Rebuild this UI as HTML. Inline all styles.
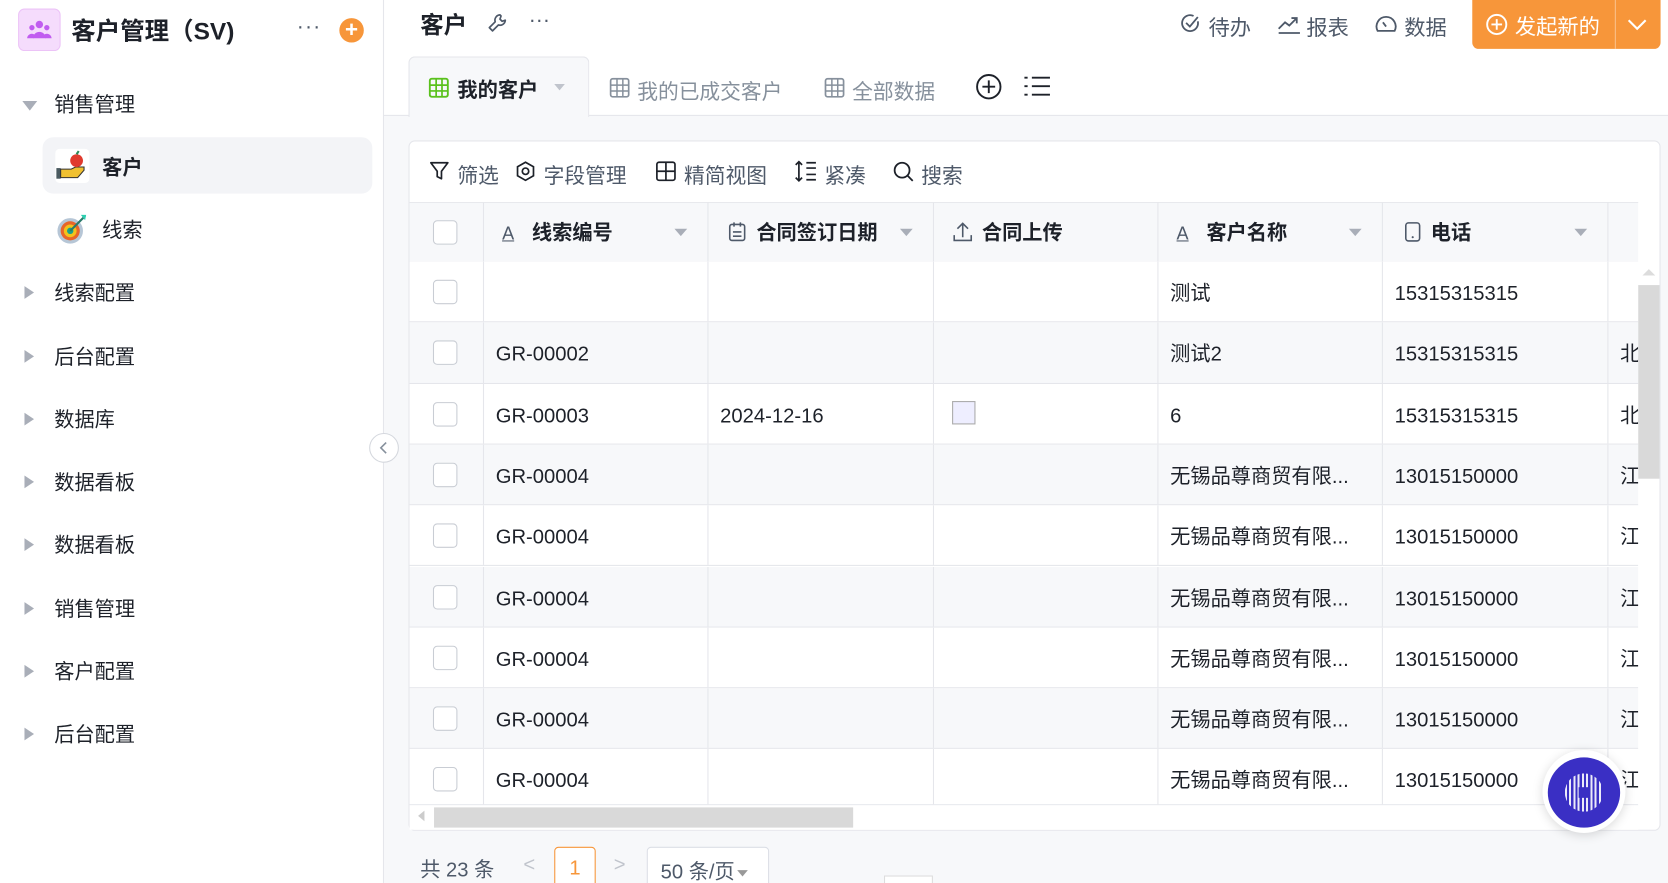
<!DOCTYPE html>
<html><head><meta charset="utf-8"><style>
*{box-sizing:border-box;margin:0;padding:0}
html,body{width:1668px;height:883px;overflow:hidden;background:#fff}
body{font-family:"Liberation Sans","Noto Sans CJK SC",sans-serif;color:#1d2129}
#w{width:1568px;height:830px;transform:scale(1.06378);transform-origin:0 0;position:relative}
.a{position:absolute;white-space:nowrap}
.side{position:absolute;left:0;top:0;width:361px;height:830px;border-right:1px solid #e5e6eb;background:#fff}
.mi{position:absolute;left:51px;font-size:19px;line-height:24px;color:#1d2129}
.tri{position:absolute;left:23px;width:0;height:0;border-top:6px solid transparent;border-bottom:6px solid transparent;border-left:9px solid #a9aeb8}
.g{color:#4e5969}
.th{position:absolute;top:190px;height:56px;border-right:1px solid #e5e6eb;font-size:19px;font-weight:bold;line-height:60px}
.cell{position:absolute;font-size:19px;line-height:24px;color:#1d2129}
.cb{position:absolute;left:407px;width:23px;height:23px;border:1px solid #c9cdd4;border-radius:4px;background:#fff}
.caret{display:inline-block;width:0;height:0;border-left:6px solid transparent;border-right:6px solid transparent;border-top:7px solid #a9aeb8;position:absolute;top:25px}
</style></head><body><div id="w">
<div class="side">
 <div class="a" style="left:17px;top:8px;width:40px;height:40px;background:#f5dcfc;border:1px solid #ecc3f7;border-radius:6px">
  <svg width="40" height="40" viewBox="0 0 40 40" style="position:absolute;left:-1px;top:-1px"><g fill="#c15df0"><circle cx="20" cy="15" r="3.5"/><circle cx="13" cy="18" r="2.5"/><circle cx="27" cy="18" r="2.5"/><path d="M14 28a6 6 0 0 1 12 0z"/><path d="M8.5 28a4.5 4.5 0 0 1 7-3.5l-1 3.5z"/><path d="M31.5 28a4.5 4.5 0 0 0-7-3.5l1 3.5z"/></g></svg>
 </div>
 <div class="a" style="left:67px;top:15px;font-size:23px;font-weight:bold;line-height:28px">客户管理（SV)</div>
 <div class="a" style="left:279px;top:14px;font-size:20px;color:#4e5969;letter-spacing:1px">···</div>
 <div class="a" style="left:319px;top:17px;width:23px;height:23px;border-radius:50%;background:#f7963a;color:#fff;text-align:center;font-size:21px;line-height:23px;font-weight:bold">+</div>
 <div class="a" style="left:21px;top:95px;border-left:7px solid transparent;border-right:7px solid transparent;border-top:9px solid #a9aeb8"></div>
 <div class="mi" style="top:88px">销售管理</div>
 <div class="a" style="left:40px;top:129px;width:310px;height:53px;background:#f3f4f7;border-radius:10px"></div>
 <div class="a" style="left:52px;top:140px;width:32px;height:32px;background:#fff;border-radius:4px">
  <svg width="32" height="32" viewBox="0 0 32 32"><rect x="1" y="18" width="4" height="10" fill="#4a5a60"/><path d="M5 19h10l4-2h8v3l-6 7H5z" fill="#f0c030" stroke="#333" stroke-width="1"/><circle cx="20" cy="11" r="6" fill="#e03a2e"/><path d="M20 5l2-3" stroke="#2a8a5a" stroke-width="2"/></svg>
 </div>
 <div class="a" style="left:96px;top:147px;font-size:19px;font-weight:bold;line-height:24px">客户</div>
 <div class="a" style="left:52px;top:199px;width:32px;height:32px">
  <svg width="32" height="32" viewBox="0 0 32 32"><circle cx="14" cy="18" r="12" fill="#b6c6d6"/><circle cx="14" cy="18" r="9" fill="#e8652a"/><circle cx="14" cy="18" r="6" fill="#f3c21b"/><circle cx="14" cy="18" r="3" fill="#1aa08a"/><path d="M14 18L28 4" stroke="#2a7a6a" stroke-width="2"/><path d="M24 3l5 0-1 5z" fill="#2ccfb0"/></svg>
 </div>
 <div class="mi" style="left:96px;top:206px">线索</div>
 <div class="tri" style="top:269px"></div><div class="mi" style="top:265px">线索配置</div>
 <div class="tri" style="top:329px"></div><div class="mi" style="top:325px">后台配置</div>
 <div class="tri" style="top:388px"></div><div class="mi" style="top:384px">数据库</div>
 <div class="tri" style="top:447px"></div><div class="mi" style="top:443px">数据看板</div>
 <div class="tri" style="top:506px"></div><div class="mi" style="top:502px">数据看板</div>
 <div class="tri" style="top:566px"></div><div class="mi" style="top:562px">销售管理</div>
 <div class="tri" style="top:625px"></div><div class="mi" style="top:621px">客户配置</div>
 <div class="tri" style="top:684px"></div><div class="mi" style="top:680px">后台配置</div>
</div>
<div class="a" style="left:347px;top:407px;width:28px;height:28px;border-radius:50%;background:#fff;border:1px solid #d5d8de;z-index:3">
 <svg width="26" height="26" viewBox="0 0 26 26"><path d="M15 8l-5 5 5 5" fill="none" stroke="#86909c" stroke-width="1.5"/></svg></div>

<div class="a" style="left:395px;top:10px;font-size:22px;font-weight:bold;line-height:28px">客户</div>
<svg class="a" style="left:457px;top:11px" width="22" height="22" viewBox="0 0 22 22"><path d="M13 3a5 5 0 0 0-4.5 6.5L3 15l3 3 5.5-5.5A5 5 0 0 0 18 8l-3 1-2-2 1-3z" fill="none" stroke="#4e5969" stroke-width="1.6" stroke-linejoin="round"/></svg>
<div class="a" style="left:497px;top:8px;font-size:20px;color:#4e5969">···</div>
<svg class="a" style="left:1109px;top:12px" width="20" height="20" viewBox="0 0 20 20"><path d="M17 8A7.5 7.5 0 1 1 13 3" fill="none" stroke="#4e5969" stroke-width="1.7"/><path d="M6 9.5l3.5 3.5L17 4" fill="none" stroke="#4e5969" stroke-width="1.7"/></svg>
<div class="a g" style="left:1136px;top:10px;font-size:20px">待办</div>
<svg class="a" style="left:1201px;top:13px" width="22" height="20" viewBox="0 0 22 20"><path d="M1 14l6-6 4 3 7-7M13 4h5v5" fill="none" stroke="#4e5969" stroke-width="1.7"/><path d="M1 18h20" stroke="#4e5969" stroke-width="1.7"/></svg>
<div class="a g" style="left:1228px;top:10px;font-size:20px">报表</div>
<svg class="a" style="left:1292px;top:12px" width="22" height="20" viewBox="0 0 22 20"><path d="M3 17a9 9 0 1 1 16 0z" fill="none" stroke="#4e5969" stroke-width="1.7"/><path d="M11 13l-3-4" stroke="#4e5969" stroke-width="1.7"/></svg>
<div class="a g" style="left:1320px;top:10px;font-size:20px">数据</div>
<div class="a" style="left:1384px;top:0;width:177px;height:46px;background:#f7963a;border-radius:0 0 6px 6px"></div>
<div class="a" style="left:1518px;top:0;width:1px;height:46px;background:#fbc08a"></div>
<svg class="a" style="left:1396px;top:12px" width="22" height="22" viewBox="0 0 22 22"><circle cx="11" cy="11" r="9" fill="none" stroke="#fff" stroke-width="1.8"/><path d="M11 6v10M6 11h10" stroke="#fff" stroke-width="1.8"/></svg>
<div class="a" style="left:1424px;top:9px;font-size:20px;color:#fff">发起新的</div>
<svg class="a" style="left:1528px;top:15px" width="22" height="16" viewBox="0 0 22 16"><path d="M3 4l8 8 8-8" fill="none" stroke="#fff" stroke-width="2"/></svg>

<div class="a" style="left:361px;top:108px;width:1207px;height:722px;background:#f7f8fa;border-top:1px solid #e5e6eb"></div>
<div class="a" style="left:384px;top:53px;width:170px;height:57px;background:#f7f8fa;border:1px solid #e5e6eb;border-bottom:none;border-radius:6px 6px 0 0"></div>
<svg class="a" style="left:403px;top:73px" width="19" height="19" viewBox="0 0 19 19"><rect x="1" y="1" width="17" height="17" rx="2" fill="none" stroke="#5ac11c" stroke-width="1.8"/><path d="M1 7h17M1 12.5h17M7 1v17M12.5 1v17" stroke="#5ac11c" stroke-width="1.6"/></svg>
<div class="a" style="left:430px;top:70px;font-size:19px;font-weight:bold">我的客户</div>
<div class="a" style="left:521px;top:79px;border-left:5px solid transparent;border-right:5px solid transparent;border-top:6px solid #c0c4cc"></div>
<svg class="a" style="left:573px;top:73px" width="19" height="19" viewBox="0 0 19 19"><rect x="1" y="1" width="17" height="17" rx="2" fill="none" stroke="#86909c" stroke-width="1.6"/><path d="M1 7h17M1 12.5h17M7 1v17M12.5 1v17" stroke="#86909c" stroke-width="1.4"/></svg>
<div class="a" style="left:599px;top:70px;font-size:19.5px;color:#86909c">我的已成交客户</div>
<svg class="a" style="left:775px;top:73px" width="19" height="19" viewBox="0 0 19 19"><rect x="1" y="1" width="17" height="17" rx="2" fill="none" stroke="#86909c" stroke-width="1.6"/><path d="M1 7h17M1 12.5h17M7 1v17M12.5 1v17" stroke="#86909c" stroke-width="1.4"/></svg>
<div class="a" style="left:801px;top:70px;font-size:19.5px;color:#86909c">全部数据</div>
<svg class="a" style="left:917px;top:69px" width="25" height="25" viewBox="0 0 25 25"><circle cx="12.5" cy="12.5" r="11" fill="none" stroke="#1d2129" stroke-width="1.8"/><path d="M12.5 6.5v12M6.5 12.5h12" stroke="#1d2129" stroke-width="1.8"/></svg>
<svg class="a" style="left:962px;top:70px" width="26" height="22" viewBox="0 0 26 22"><g stroke="#1d2129" stroke-width="1.8"><path d="M8 3h17M8 11h17M8 19h17"/><path d="M1 3h3M1 11h3M1 19h3"/></g></svg>

<div class="a" style="left:384px;top:132px;width:1177px;height:649px;background:#fff;border:1px solid #e5e6eb;border-radius:6px;overflow:hidden"></div>
<svg class="a" style="left:403px;top:151px" width="20" height="20" viewBox="0 0 20 20"><path d="M2 2h16l-6 8v7l-4-2v-5z" fill="none" stroke="#1d2129" stroke-width="1.6" stroke-linejoin="round"/></svg>
<div class="a g" style="left:430px;top:149px;font-size:19.5px">筛选</div>
<svg class="a" style="left:484px;top:151px" width="20" height="20" viewBox="0 0 20 20"><path d="M10 1.5l7.5 4.3v8.4L10 18.5l-7.5-4.3V5.8z" fill="none" stroke="#1d2129" stroke-width="1.6"/><circle cx="10" cy="10" r="3" fill="none" stroke="#1d2129" stroke-width="1.6"/></svg>
<div class="a g" style="left:511px;top:149px;font-size:19.5px">字段管理</div>
<svg class="a" style="left:616px;top:151px" width="20" height="20" viewBox="0 0 20 20"><rect x="1.5" y="1.5" width="17" height="17" rx="2" fill="none" stroke="#1d2129" stroke-width="1.6"/><path d="M10 1.5v17M1.5 10h17" stroke="#1d2129" stroke-width="1.6"/></svg>
<div class="a g" style="left:643px;top:149px;font-size:19.5px">精简视图</div>
<svg class="a" style="left:747px;top:150px" width="22" height="22" viewBox="0 0 22 22"><g stroke="#1d2129" stroke-width="1.6" fill="none"><path d="M4 2v18M1 5l3-3 3 3M1 17l3 3 3-3M11 3h9M11 8h9M11 14h9M11 19h9"/></g></svg>
<div class="a g" style="left:775px;top:149px;font-size:19.5px">紧凑</div>
<svg class="a" style="left:839px;top:151px" width="21" height="21" viewBox="0 0 21 21"><circle cx="9" cy="9" r="7" fill="none" stroke="#1d2129" stroke-width="1.7"/><path d="M14 14l5 5" stroke="#1d2129" stroke-width="1.7"/></svg>
<div class="a g" style="left:866px;top:149px;font-size:19.5px">搜索</div>

<div class="a" style="left:385px;top:190px;width:1155px;height:567px;overflow:hidden;border-top:1px solid #e5e6eb">
<div style="position:absolute;left:0;top:0;width:1155px;height:56px;background:#f7f8fa;border-bottom:1px solid #e5e6eb"></div>
</div>
<div class="a" style="left:385px;top:190px;width:1155px;height:567px;overflow:hidden">
 <div class="th" style="left:0;width:70px;top:0"></div>
 <div class="th" style="left:70px;width:211px;top:0"><span style="position:absolute;left:17px;top:0;font-weight:normal;color:#4e5969;font-size:17px;text-decoration:underline">A</span><span style="position:absolute;left:45px">线索编号</span><span class="caret" style="left:179px"></span></div>
 <div class="th" style="left:281px;width:212px;top:0"><svg style="position:absolute;left:18px;top:18px" width="18" height="20" viewBox="0 0 18 20"><rect x="2" y="3" width="14" height="15" rx="2" fill="none" stroke="#4e5969" stroke-width="1.5"/><path d="M6 1v4M12 1v4M5 10h8M5 14h8" stroke="#4e5969" stroke-width="1.5"/></svg><span style="position:absolute;left:45px">合同签订日期</span><span class="caret" style="left:180px"></span></div>
 <div class="th" style="left:493px;width:211px;top:0"><svg style="position:absolute;left:17px;top:18px" width="20" height="20" viewBox="0 0 20 20"><path d="M10 15V2M5 7l5-5 5 5M2 13v5h16v-5" fill="none" stroke="#4e5969" stroke-width="1.5"/></svg><span style="position:absolute;left:45px">合同上传</span></div>
 <div class="th" style="left:704px;width:211px;top:0"><span style="position:absolute;left:17px;top:0;font-weight:normal;color:#4e5969;font-size:17px;text-decoration:underline">A</span><span style="position:absolute;left:45px">客户名称</span><span class="caret" style="left:179px"></span></div>
 <div class="th" style="left:915px;width:212px;top:0"><svg style="position:absolute;left:20px;top:18px" width="16" height="20" viewBox="0 0 16 20"><rect x="1.5" y="1.5" width="13" height="17" rx="2.5" fill="none" stroke="#4e5969" stroke-width="1.5"/><circle cx="8" cy="15" r="1" fill="#4e5969"/></svg><span style="position:absolute;left:45px">电话</span><span class="caret" style="left:180px"></span></div>
</div>
<div id="rows"></div>
<script>
var d=[["","","","测试","15315315315",""],["GR-00002","","","测试2","15315315315","北"],["GR-00003","2024-12-16","img","6","15315315315","北"]];
for(var i=0;i<6;i++)d.push(["GR-00004","","","无锡品尊商贸有限...","13015150000","江"]);
var h="",cols=[385,455,666,878,1089,1300,1512];
for(var i=0;i<9;i++){var y=246+i*57.3;var hh=Math.min(57.3,757-y);
h+='<div class="a" style="left:385px;top:'+y+'px;width:1155px;height:'+hh+'px;overflow:hidden;background:'+(i%2?'#f7f8fa':'#fff')+';border-bottom:1px solid #e5e6eb">';
for(var c=1;c<7;c++)h+='<div style="position:absolute;left:'+(cols[c]-385-1)+'px;top:0;width:1px;height:60px;background:#e5e6eb"></div>';
h+='<div class="cb" style="left:22px;top:17px"></div>';
for(var c=0;c<6;c++){var t=d[i][c];if(!t)continue;
if(t=="img"){h+='<div style="position:absolute;left:'+(cols[c+1]-385+17)+'px;top:16px;width:22px;height:22px;border:1px solid #aaa;background:#eef"></div>';continue;}
h+='<div class="cell" style="left:'+(cols[c+1]-385+11)+'px;top:19px">'+t+'</div>';}
h+='</div>';}
document.getElementById('rows').innerHTML=h;
</script>
<div class="cb" style="top:207px;z-index:2"></div>
<div class="a" style="left:1540px;top:246px;width:20px;height:512px;background:#fff"></div>
<div class="a" style="left:1540px;top:268px;width:20px;height:182px;background:#d9d9d9"></div>
<div class="a" style="left:1544px;top:253px;border-left:6px solid transparent;border-right:6px solid transparent;border-bottom:6px solid #dcdcdc"></div>
<div class="a" style="left:385px;top:757px;width:1155px;height:23px;background:#fff"></div>
<div class="a" style="left:408px;top:759px;width:394px;height:19px;background:#d9d9d9"></div>
<div class="a" style="left:393px;top:762px;border-top:5px solid transparent;border-bottom:5px solid transparent;border-right:6px solid #ccc"></div>
<div class="a" style="left:395px;top:803px;font-size:19px;color:#4e5969">共 23 条</div>
<div class="a" style="left:492px;top:803px;font-size:19px;color:#c0c4cc">&lt;</div>
<div class="a" style="left:521px;top:796px;width:39px;height:40px;border:1px solid #f7963a;border-radius:4px;background:#fff;color:#f7963a;font-size:19px;text-align:center;line-height:40px">1</div>
<div class="a" style="left:577px;top:803px;font-size:19px;color:#c0c4cc">&gt;</div>
<div class="a" style="left:608px;top:796px;width:115px;height:40px;border:1px solid #dcdfe6;border-radius:4px;background:#fff;font-size:19px;color:#4e5969;padding:8px 0 0 12px">50 条/页<span style="display:inline-block;border-left:5px solid transparent;border-right:5px solid transparent;border-top:6px solid #999;margin-left:2px;vertical-align:middle"></span></div>
<div class="a" style="left:831px;top:823px;width:46px;height:10px;border:1px solid #ddd;background:#fff"></div>
<div class="a" style="left:1450px;top:705px;width:78px;height:78px;border-radius:50%;background:#fff;box-shadow:0 2px 10px rgba(0,0,0,.15)"></div>
<div class="a" style="left:1455px;top:712px;width:68px;height:66px;border-radius:50%;background:#3a2fc4"></div>
<div class="a" style="left:1471px;top:727px;width:36px;height:36px;border-radius:50%;background:repeating-linear-gradient(90deg,#fff 0 2px,transparent 2px 4px),#3a2fc4;opacity:.9"></div>
<div class="a" style="left:1484px;top:740px;width:10px;height:10px;background:#3a2fc4"></div>
</div></body></html>
